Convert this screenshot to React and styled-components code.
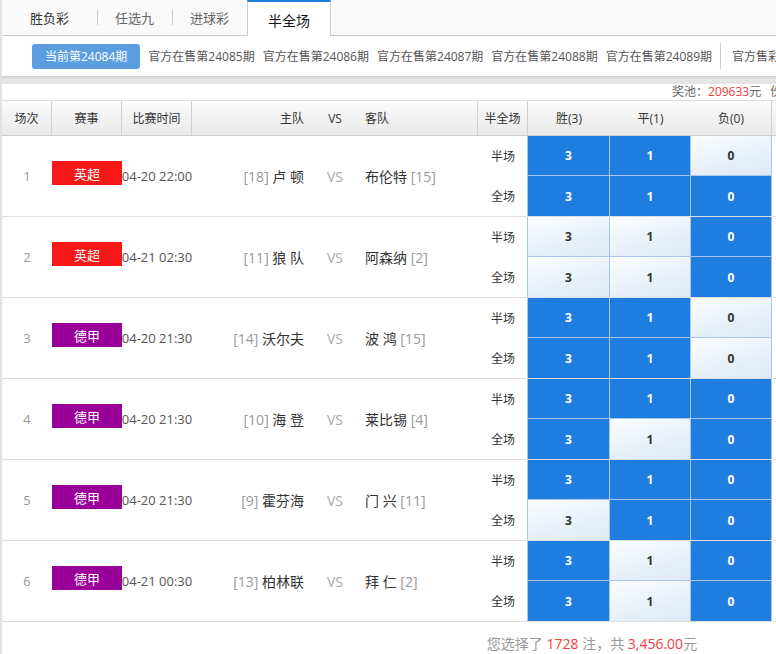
import React from "react";
import styled, { createGlobalStyle } from "styled-components";

const Global = createGlobalStyle`
  html, body { margin: 0; padding: 0; background: #fff; overflow: hidden; }
  body { font-family: "Open Sans", "Noto Sans CJK SC", sans-serif; color: #333; }
`;

const COLS = "50px 70px 70px 120px 46px 120px 50px 82px 81px 81px 409px";

const Page = styled.div`
  width: 1180px;
  border-left: 2px solid #e3e3e3;
  background: #fff;
`;

const TabBar = styled.div`
  display: flex;
  height: 35px;
  background: #fafafa;
  border-bottom: 1px solid #ccc;
`;

const Tab = styled.div`
  position: relative;
  width: ${(p) => p.$w}px;
  box-sizing: border-box;
  display: flex;
  align-items: center;
  justify-content: center;
  font-size: ${(p) => (p.$active ? 14 : 13)}px;
  color: ${(p) => (p.$active ? "#111" : p.$dark ? "#333" : "#666")};
  ${(p) =>
    p.$active &&
    `
    background: #fff;
    height: 36px;
    margin-bottom: -1px;
    border-top: 2px solid #1e7de0;
    border-left: 1px solid #ccc;
    border-right: 1px solid #ccc;
    padding-top: 1px;
  `}
  ${(p) =>
    p.$sep &&
    `
    &::before {
      content: "";
      position: absolute;
      left: 0;
      top: 10px;
      width: 1px;
      height: 15px;
      background: #ccc;
    }
  `}
`;

const PeriodBar = styled.div`
  display: flex;
  align-items: center;
  height: 40px;
  padding-left: 30px;
  gap: 7px;
  white-space: nowrap;
  background: #fff;
`;

const CurrentBtn = styled.div`
  height: 25px;
  padding: 0 13px;
  display: flex;
  align-items: center;
  background: #5b9ee0;
  color: #fff;
  font-size: 12px;
  border-radius: 3px;
`;

const PeriodItem = styled.div`
  font-size: 12px;
  color: #555;
  margin-left: 1px;
`;

const VSep = styled.div`
  width: 1px;
  height: 26px;
  background: #ccc;
  margin: 0 3px 0 1px;
`;

const GreyBand = styled.div`
  height: 8px;
  background: linear-gradient(#c9c9c9 0, #d8d8d8 1px, #e4e4e4 3px, #e4e4e4 100%);
`;

const InfoBar = styled.div`
  display: flex;
  gap: 9px;
  height: 16px;
  line-height: 16px;
  font-size: 12px;
  color: #666;
  padding-left: 670px;
  white-space: nowrap;
`;

const Red = styled.span`
  color: #f23b3b;
`;

const HeaderRow = styled.div`
  display: grid;
  grid-template-columns: ${COLS};
  height: 34px;
  border-top: 1px solid #ddd;
  border-bottom: 1px solid #ccc;
  background: linear-gradient(#fbfbfb, #e9e9e9);
`;

const HCell = styled.div`
  display: flex;
  align-items: center;
  justify-content: ${(p) => p.$align || "center"};
  font-size: 12px;
  color: #333;
  box-sizing: border-box;
  ${(p) => p.$pr && `padding-right: ${p.$pr}px;`}
  ${(p) => p.$pl && `padding-left: ${p.$pl}px;`}
  ${(p) => p.$border && `border-right: 1px solid #d2d2d2;`}
`;

const Row = styled.div`
  display: grid;
  grid-template-columns: ${COLS};
  height: 80px;
  border-bottom: 1px solid #dedede;
`;

const Cell = styled.div`
  display: flex;
  align-items: center;
  justify-content: ${(p) => p.$align || "center"};
  box-sizing: border-box;
  font-size: 14px;
  color: #333;
  white-space: nowrap;
  ${(p) => p.$pr && `padding-right: ${p.$pr}px;`}
  ${(p) => p.$pl && `padding-left: ${p.$pl}px;`}
`;

const Num = styled(Cell)`
  font-size: 13px;
  color: #999;
`;

const Badge = styled.div`
  width: 70px;
  height: 24px;
  margin-bottom: 6px;
  display: flex;
  align-items: center;
  justify-content: center;
  font-size: 13px;
  color: #fff;
  background: ${(p) => p.$color};
`;

const Time = styled(Cell)`
  font-size: 13px;
  color: #555;
`;

const Rank = styled.span`
  color: #999;
`;

const VS = styled(Cell)`
  color: #aaa;
`;

const Labels = styled.div`
  display: grid;
  grid-template-rows: 40px 40px;
  border-right: 1px solid #a9c7ea;
`;

const Label = styled.div`
  display: flex;
  align-items: center;
  justify-content: center;
  font-size: 12px;
  color: #333;
  padding-left: 1px;
`;

const Picks = styled.div`
  grid-column: 8 / span 3;
  display: grid;
  grid-template-columns: 81px 80px 80px;
  grid-template-rows: 39px 40px;
  gap: 1px;
  background: #a9c7ea;
  border-right: 1px solid #a9c7ea;
`;

const Pick = styled.div`
  display: flex;
  align-items: center;
  justify-content: center;
  font-size: 12px;
  font-weight: 700;
  color: ${(p) => (p.$on ? "#fff" : "#333")};
  background: ${(p) =>
    p.$on ? "#1f7ddf" : "linear-gradient(165deg, #fbfdff 0%, #eaf2fa 50%, #dde9f6 100%)"};
`;

const Footer = styled.div`
  height: 32px;
  line-height: 32px;
  text-align: center;
  font-size: 14px;
  color: #999;
  padding-top: 6px;
`;

const matches = [
  { n: 1, lg: "英超", c: "#f91616", t: "04-20 22:00", hr: 18, h: "卢 顿", a: "布伦特", ar: 15, p: [[1, 1, 0], [1, 1, 1]] },
  { n: 2, lg: "英超", c: "#f91616", t: "04-21 02:30", hr: 11, h: "狼 队", a: "阿森纳", ar: 2, p: [[0, 0, 1], [0, 0, 1]] },
  { n: 3, lg: "德甲", c: "#990099", t: "04-20 21:30", hr: 14, h: "沃尔夫", a: "波 鸿", ar: 15, p: [[1, 1, 0], [1, 1, 0]] },
  { n: 4, lg: "德甲", c: "#990099", t: "04-20 21:30", hr: 10, h: "海 登", a: "莱比锡", ar: 4, p: [[1, 1, 1], [1, 0, 1]] },
  { n: 5, lg: "德甲", c: "#990099", t: "04-20 21:30", hr: 9, h: "霍芬海", a: "门 兴", ar: 11, p: [[1, 1, 1], [0, 1, 1]] },
  { n: 6, lg: "德甲", c: "#990099", t: "04-21 00:30", hr: 13, h: "柏林联", a: "拜 仁", ar: 2, p: [[1, 0, 1], [1, 0, 1]] },
];

const vals = ["3", "1", "0"];

export default function App() {
  return (
    <>
      <Global />
      <Page>
        <TabBar>
          <Tab $w={95} $dark>胜负彩</Tab>
          <Tab $w={75} $sep>任选九</Tab>
          <Tab $w={75} $sep>进球彩</Tab>
          <Tab $w={84} $active>半全场</Tab>
        </TabBar>
        <PeriodBar>
          <CurrentBtn>当前第24084期</CurrentBtn>
          {["24085", "24086", "24087", "24088", "24089"].map((x) => (
            <PeriodItem key={x}>官方在售第{x}期</PeriodItem>
          ))}
          <VSep />
          <PeriodItem>官方售彩截止时间：04-20 20:00</PeriodItem>
        </PeriodBar>
        <GreyBand />
        <InfoBar>
          <span>
            奖池：<Red>209633</Red>元
          </span>
          <span>份额说明</span>
        </InfoBar>
        <HeaderRow>
          <HCell $border>场次</HCell>
          <HCell $border>赛事</HCell>
          <HCell $border>比赛时间</HCell>
          <HCell $align="flex-end" $pr={8}>主队</HCell>
          <HCell>VS</HCell>
          <HCell $align="flex-start" $pl={7} $border>客队</HCell>
          <HCell $border>半全场</HCell>
          <HCell>胜(3)</HCell>
          <HCell>平(1)</HCell>
          <HCell $border>负(0)</HCell>
          <HCell />
        </HeaderRow>
        {matches.map((m) => (
          <Row key={m.n}>
            <Num>{m.n}</Num>
            <Cell>
              <Badge $color={m.c}>{m.lg}</Badge>
            </Cell>
            <Time>{m.t}</Time>
            <Cell $align="flex-end" $pr={8}>
              <Rank>[{m.hr}]</Rank>&nbsp;{m.h}
            </Cell>
            <VS>VS</VS>
            <Cell $align="flex-start" $pl={7}>
              {m.a}&nbsp;<Rank>[{m.ar}]</Rank>
            </Cell>
            <Labels>
              <Label>半场</Label>
              <Label>全场</Label>
            </Labels>
            <Picks>
              {m.p.flatMap((r, ri) =>
                r.map((on, ci) => (
                  <Pick key={`${ri}-${ci}`} $on={!!on}>
                    {vals[ci]}
                  </Pick>
                ))
              )}
            </Picks>
            <Cell />
          </Row>
        ))}
        <Footer>
          您选择了 <Red>1728</Red> 注，共 <Red>3,456.00</Red>元
        </Footer>
      </Page>
    </>
  );
}
